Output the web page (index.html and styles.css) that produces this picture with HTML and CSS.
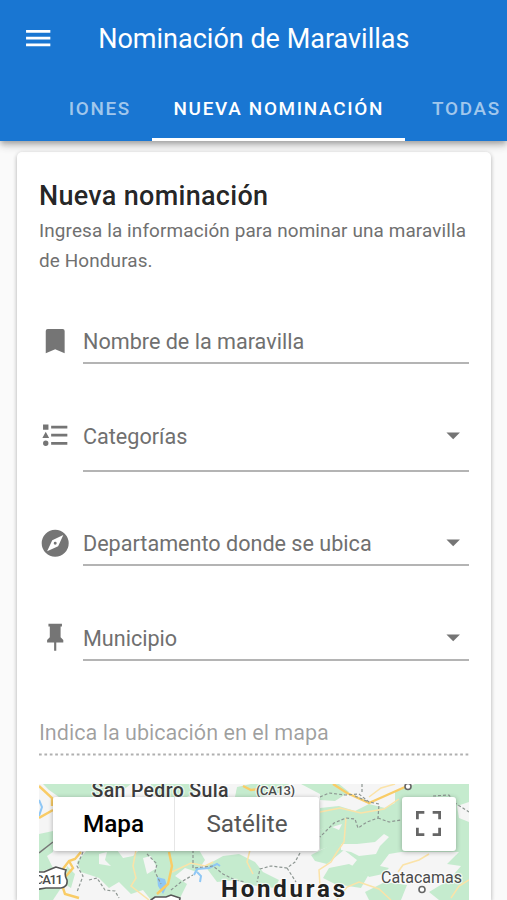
FILE: index.html
```html
<!DOCTYPE html>
<html lang="es">
<head>
    <meta charset="UTF-8">
    <meta name="viewport" content="width=device-width, initial-scale=1.0">
    <title>Nominación de Maravillas</title>
    <link rel="stylesheet" href="styles.css">
</head>
<body>
    <header class="app-bar">
        <div class="toolbar">
            <svg class="icon" viewBox="0 0 24 24"><path d="M3,6H21V8H3V6M3,11H21V13H3V11M3,16H21V18H3V16Z"/></svg>
            <h1>Nominación de Maravillas</h1>
        </div>
        <nav class="tabs">
            <a class="tab tab-prev">Nominaciones</a>
            <a class="tab active">Nueva nominación</a>
            <a class="tab">Todas</a>
        </nav>
    </header>

    <main class="card">
        <h2>Nueva nominación</h2>
        <p class="subtitle">Ingresa la información para nominar una maravilla de Honduras.</p>

        <form class="form">
            <div class="field">
                <svg class="icon" viewBox="0 0 24 24"><path d="M17.5,3H6.5A1.5,1.5 0 0,0 5,4.5V21L12,18L19,21V4.5A1.5,1.5 0 0,0 17.5,3Z"/></svg>
                <div class="control"><label>Nombre de la maravilla</label></div>
            </div>
            <div class="field">
                <svg class="icon" viewBox="0 0 24 24"><path d="M5,9.5L7.5,14H2.5L5,9.5M3,4H7V8H3V4M5,20A2,2 0 0,0 7,18A2,2 0 0,0 5,16A2,2 0 0,0 3,18A2,2 0 0,0 5,20M9,5V7H21V5H9M9,19H21V17H9V19M9,13H21V11H9V13Z"/></svg>
                <div class="control control-tall"><label>Categorías</label><svg class="icon" viewBox="0 0 24 24"><path d="M7,10L12,15L17,10H7Z"/></svg></div>
            </div>
            <div class="field">
                <svg class="icon" viewBox="0 0 24 24"><path fill-rule="evenodd" d="M14.19,14.19L6,18L9.81,9.81L18,6L14.19,14.19M12,2A10,10 0 0,0 2,12A10,10 0 0,0 12,22A10,10 0 0,0 22,12A10,10 0 0,0 12,2M12,10.9A1.1,1.1 0 0,0 10.9,12A1.1,1.1 0 0,0 12,13.1A1.1,1.1 0 0,0 13.1,12A1.1,1.1 0 0,0 12,10.9Z"/></svg>
                <div class="control"><label>Departamento donde se ubica</label><svg class="icon" viewBox="0 0 24 24"><path d="M7,10L12,15L17,10H7Z"/></svg></div>
            </div>
            <div class="field">
                <svg class="icon" viewBox="0 0 24 24"><path d="M16,12V4H17V2H7V4H8V12L6,14V16H11.2V22H12.8V16H18V14L16,12Z"/></svg>
                <div class="control"><label>Municipio</label><svg class="icon" viewBox="0 0 24 24"><path d="M7,10L12,15L17,10H7Z"/></svg></div>
            </div>
            <div class="field-disabled">
                <label>Indica la ubicación en el mapa</label>
                <svg class="dots" viewBox="0 0 430 3"><path d="M0 1.5H430"/></svg>
            </div>
        </form>

        <div class="map">
            <svg class="map-canvas" viewBox="0 0 430 116">
                <!-- bosques -->
                <g class="forest">
                    <path d="M4 0H92L84 6L70 5L60 13H20L10 6Z"/>
                    <path d="M0 50L14 47V68L8 72L14 84L0 88Z"/>
                    <path d="M48 66H78L84 74L94 72L100 66H160L166 76L158 88L146 84L136 92L148 100L140 116H112L104 106L92 110L80 98L70 104L60 94L42 88L38 78Z"/>
                    <path d="M28 82L36 90L32 104L22 98L26 90Z"/>
                    <path d="M0 98L12 92L22 104L14 116H0Z"/>
                    <path d="M112 0H150L158 7L148 13H120L110 8Z"/>
                    <path d="M198 3L212 0H250L240 9L222 13H196Z"/>
                    <path d="M262 0H300L310 8L296 17L281 16V24L300 22L316 27L330 20L346 24L362 16V68L350 70L341 82L350 84L344 90L330 93L326 88L310 86L318 76L305 66L288 80L276 77L272 71L290 62L283 55L294 48L310 50L322 42L300 36L281 46V10Z"/>
                    <path d="M281 46L300 34L330 42L312 54L292 62L281 66Z"/>
                    <path d="M356 8L376 0H430V116H400L390 108L410 96L422 82L408 80L420 68H356Z"/>
                    <path d="M166 82L184 72L200 70L216 78L224 88L240 96L236 104L212 101L196 96L178 98Z"/>
                    <path d="M290 84L310 80L330 90L322 104L296 100L284 94Z"/>
                    <path d="M326 108L346 98L368 101L362 116H330Z"/>
                </g>
                <g class="clearing">
                    <path d="M60 70L68 68L66 76L72 82L60 80Z"/>
                    <path d="M104 74L112 72L118 84L108 90Z"/>
                    <path d="M42 96L52 98L60 108L54 116H42Z"/>
                    <path d="M302 60L318 60L336 58L345 50L350 53L341 62L337 70L320 72L312 68L302 66Z"/>
                    <path d="M293 43L303 40L300 46Z"/>
                    <path d="M418 22L430 18V38L420 34Z"/>
                    <path d="M376 70H418L404 78L396 86L376 82L368 92L358 88L364 76Z"/>
                </g>
                <g class="water">
                    <path d="M118 93L126 95L128 102L124 110L119 102Z"/>
                    <path class="river" d="M155 91L158 85L170 84L178 80L181 82M158 88L162 92L161 98"/>
                    <path class="river" d="M0 16L3 23L0 32"/>
                </g>
                <!-- carreteras -->
                <g class="minor-road">
                    <path d="M97 66L94 82L97 94L92 102L110 116"/>
                    <path d="M133 88L152 79L166 82L174 78"/>
                    <path d="M211 66L208 78L214 90"/>
                    <path d="M281 28L301 24L322 29L345 25L360 15"/>
                    <path d="M307 34L305 58L298 68L292 78L280 86L281 102"/>
                    <path d="M330 13L342 4L356 0"/>
                    <path d="M359 88L364 81L380 76L390 70"/>
                    <path d="M298 116L308 103L320 98L340 105L352 116"/>
                    <path d="M412 114L420 102L430 96"/>
                </g>
                <g class="road">
                    <path d="M0 2L13 14V22M0 34L14 26"/>
                    <path d="M130 68L133 82L129 100L118 110"/>
                    <path d="M20 90L30 77L36 75L42 68M30 77L34 84L22 98L26 110L40 114"/>
                    <path d="M204 2L212 6L220 5"/>
                    <path d="M294 0L308 9L330 19L366 3"/>
                </g>
                <path class="rail" d="M0 69L14 58"/>
                <!-- limites departamentales -->
                <g class="border">
                    <path d="M44 68L38 82L44 92L38 108M50 96L58 94L66 106L76 107L80 114"/>
                    <path d="M108 70L118 80L116 88L122 100M132 106L142 98L154 91"/>
                    <path d="M154 66V84L174 82L184 90L196 96L206 98"/>
                    <path d="M281 13L290 9L306 11L320 10L330 18L340 20L339 34L328 38L319 44L316 35L307 34L295 39L281 53"/>
                    <path d="M339 34L350 38L362 36M394 12L410 11L416 19L430 28"/>
                    <path d="M261 69L256 78L248 84L232 82L221 85L218 98M248 84L257 98"/>
                    <path d="M323 0V10M316 12L330 18"/>
                </g>
                <g class="marker">
                    <circle cx="369" cy="2.5" r="3"/>
                    <circle cx="383" cy="105.5" r="3"/>
                </g>
                <path class="shield" d="M-6 88H5Q12 85 17 83L27 86Q25 91 28 96Q29 103 22 104L7 104L-6 106Z"/>
                <path class="shield" d="M112 116L116 113L127 113L132 111L141 114L140 120H112Z"/>
                <text class="label-town" x="52.5" y="13" textLength="137">San Pedro Sula</text>
                <text class="label-road" x="217" y="10.5" textLength="39">(CA13)</text>
                <text class="label-road" x="-4" y="99.500" textLength="28">CA11</text>
                <text class="label-country" x="182" y="113" textLength="124">Honduras</text>
                <text class="label-city" x="342" y="98.5" textLength="81">Catacamas</text>
            </svg>
            <div class="map-controls">
                <div class="map-type">
                    <button type="button" class="selected">Mapa</button>
                    <button type="button">Satélite</button>
                </div>
                <button type="button" class="fullscreen" aria-label="Pantalla completa">
                    <svg viewBox="0 0 18 18"><path d="M0,0V6H2V2H6V0ZM16,0H12V2H16V6H18V0ZM16,16H12V18H18V12H16ZM2,12H0V18H6V16H2Z"/></svg>
                </button>
            </div>
        </div>
    </main>
</body>
</html>
```

FILE: styles.css
```css
* {
    box-sizing: border-box;
}
body {
    margin: 0;
    height: 900px;
    overflow: hidden;
    font-family: Roboto, sans-serif;
    background-color: #fafafa;
    color: #707070;
}
h1, h2, p {
    margin: 0;
}
.icon {
    flex: none;
    width: 32.4px;
    height: 32.4px;
    fill: #757575;
}
.app-bar {
    position: relative;
    height: 141px;
    background-color: #1976d2;
    color: white;
    box-shadow: 0 3px 5px -1px rgba(0,0,0,0.2), 0 5px 7px rgba(0,0,0,0.14), 0 1px 13px rgba(0,0,0,0.12);
}
.toolbar {
    display: flex;
    align-items: center;
    gap: 43.5px;
    height: 77px;
    padding-left: 22.3px;
}
.toolbar .icon {
    fill: white;
}
h1 {
    font-size: 27px;
    font-weight: 400;
    white-space: nowrap;
}
.tabs {
    display: flex;
    height: 64px;
    margin-left: 70px;
    overflow: hidden;
}
.tab {
    display: flex;
    flex: none;
    align-items: center;
    padding: 1px 21px 0 21.5px;
    border-bottom: 3px solid transparent;
    color: rgba(255,255,255,0.6);
    font-size: 18.9px;
    font-weight: 500;
    letter-spacing: 1.69px;
    text-transform: uppercase;
    white-space: nowrap;
}
.tab-prev {
    justify-content: flex-end;
    width: 82px;
    padding-left: 0;
    overflow: hidden;
}
.tab.active {
    width: 253px;
    border-bottom-color: white;
    color: white;
}
.tab:last-child {
    padding-left: 27px;
}
.card {
    height: 748px;
    margin: 11px 16px 0 17px;
    padding: 24px 22px 0;
    background-color: white;
    border-radius: 5px 5px 0 0;
    box-shadow: 0 2px 4px rgba(0,0,0,0.2), 0 1px 5px rgba(0,0,0,0.12);
}
h2 {
    color: rgba(0,0,0,0.87);
    font-size: 27px;
    font-weight: 500;
    line-height: 40px;
    letter-spacing: 0.3px;
}
.subtitle {
    font-size: 18.9px;
    line-height: 30px;
    letter-spacing: 0.13px;
}
.form {
    display: flex;
    flex-direction: column;
    gap: 48.5px;
    margin-top: 42px;
}
.field {
    display: flex;
    align-items: flex-start;
    gap: 11.6px;
}
.field > .icon {
    margin-top: 6.5px;
}
.control {
    display: flex;
    flex: 1;
    align-items: flex-start;
    justify-content: space-between;
    height: 46px;
    border-bottom: 2px solid #b4b4b4;
}
.control-tall {
    height: 59px;
}
.control .icon {
    margin-top: 6.3px;
}
label {
    font-size: 21.6px;
    line-height: 47px;
}
.field-disabled {
    height: 46px;
    color: rgba(0,0,0,0.38);
}
.field-disabled label {
    display: block;
    height: 43.5px;
}
.dots {
    display: block;
    width: 100%;
    height: 3px;
    stroke: #b0b0b0;
    stroke-width: 1.8;
    stroke-dasharray: 2.7 2.7;
}
.map {
    position: relative;
    height: 116px;
    margin-top: 29px;
    overflow: hidden;
    background-color: #f5f5f5;
}
.map-canvas {
    display: block;
    width: 430px;
    height: 116px;
}
.map-canvas path {
    fill: none;
}
.map-canvas .forest path {
    fill: #c5ebce;
}
.map-canvas .clearing path {
    fill: #f5f5f5;
}
.map-canvas .water path {
    fill: #8fc7f5;
}
.map-canvas .water .river {
    fill: none;
    stroke: #8fc7f5;
    stroke-width: 2;
}
.minor-road {
    stroke: #fbe3a8;
    stroke-width: 1.5;
}
.road {
    stroke: #f9cc66;
    stroke-width: 2.4;
}
.rail {
    stroke: #777;
    stroke-width: 1.5;
}
.border {
    stroke: #8d9692;
    stroke-width: 1.2;
    stroke-dasharray: 3 2;
}
.marker {
    fill: white;
    stroke: #666;
    stroke-width: 1.6;
}
.map-canvas .shield {
    fill: white;
    stroke: #555;
    stroke-width: 1.6;
}
.map-canvas text {
    fill: #4a4a4a;
    stroke: rgba(255,255,255,0.7);
    stroke-width: 2.5px;
    stroke-linejoin: round;
    paint-order: stroke;
}
.map-canvas .label-town {
    fill: #3c3c3c;
    font-size: 19.5px;
    font-weight: 500;
}
.map-canvas .label-road {
    font-size: 13px;
    font-weight: 500;
}
.map-canvas .label-country {
    fill: #222;
    font-size: 24px;
    font-weight: 700;
}
.map-canvas .label-city {
    font-size: 16px;
}
.map-controls {
    position: absolute;
    top: 13px;
    left: 14px;
    right: 13.5px;
    display: flex;
    justify-content: space-between;
}
.map-type {
    display: flex;
    border-radius: 3px;
    box-shadow: 0 1px 5px rgba(0,0,0,0.3);
}
button {
    height: 54px;
    padding: 0 0 1px;
    border: none;
    background-color: white;
    color: #565656;
    font-family: inherit;
    font-size: 24.3px;
}
.map-type button {
    width: 144px;
    border-radius: 0 3px 3px 0;
}
.map-type .selected {
    width: 122px;
    border-right: 1px solid #e6e6e6;
    border-radius: 3px 0 0 3px;
    color: black;
    font-weight: 500;
}
.fullscreen {
    display: flex;
    align-items: center;
    justify-content: center;
    width: 54px;
    border-radius: 3px;
    box-shadow: 0 1px 5px rgba(0,0,0,0.3);
}
.fullscreen svg {
    width: 25px;
    height: 25px;
    fill: #666;
}
```
